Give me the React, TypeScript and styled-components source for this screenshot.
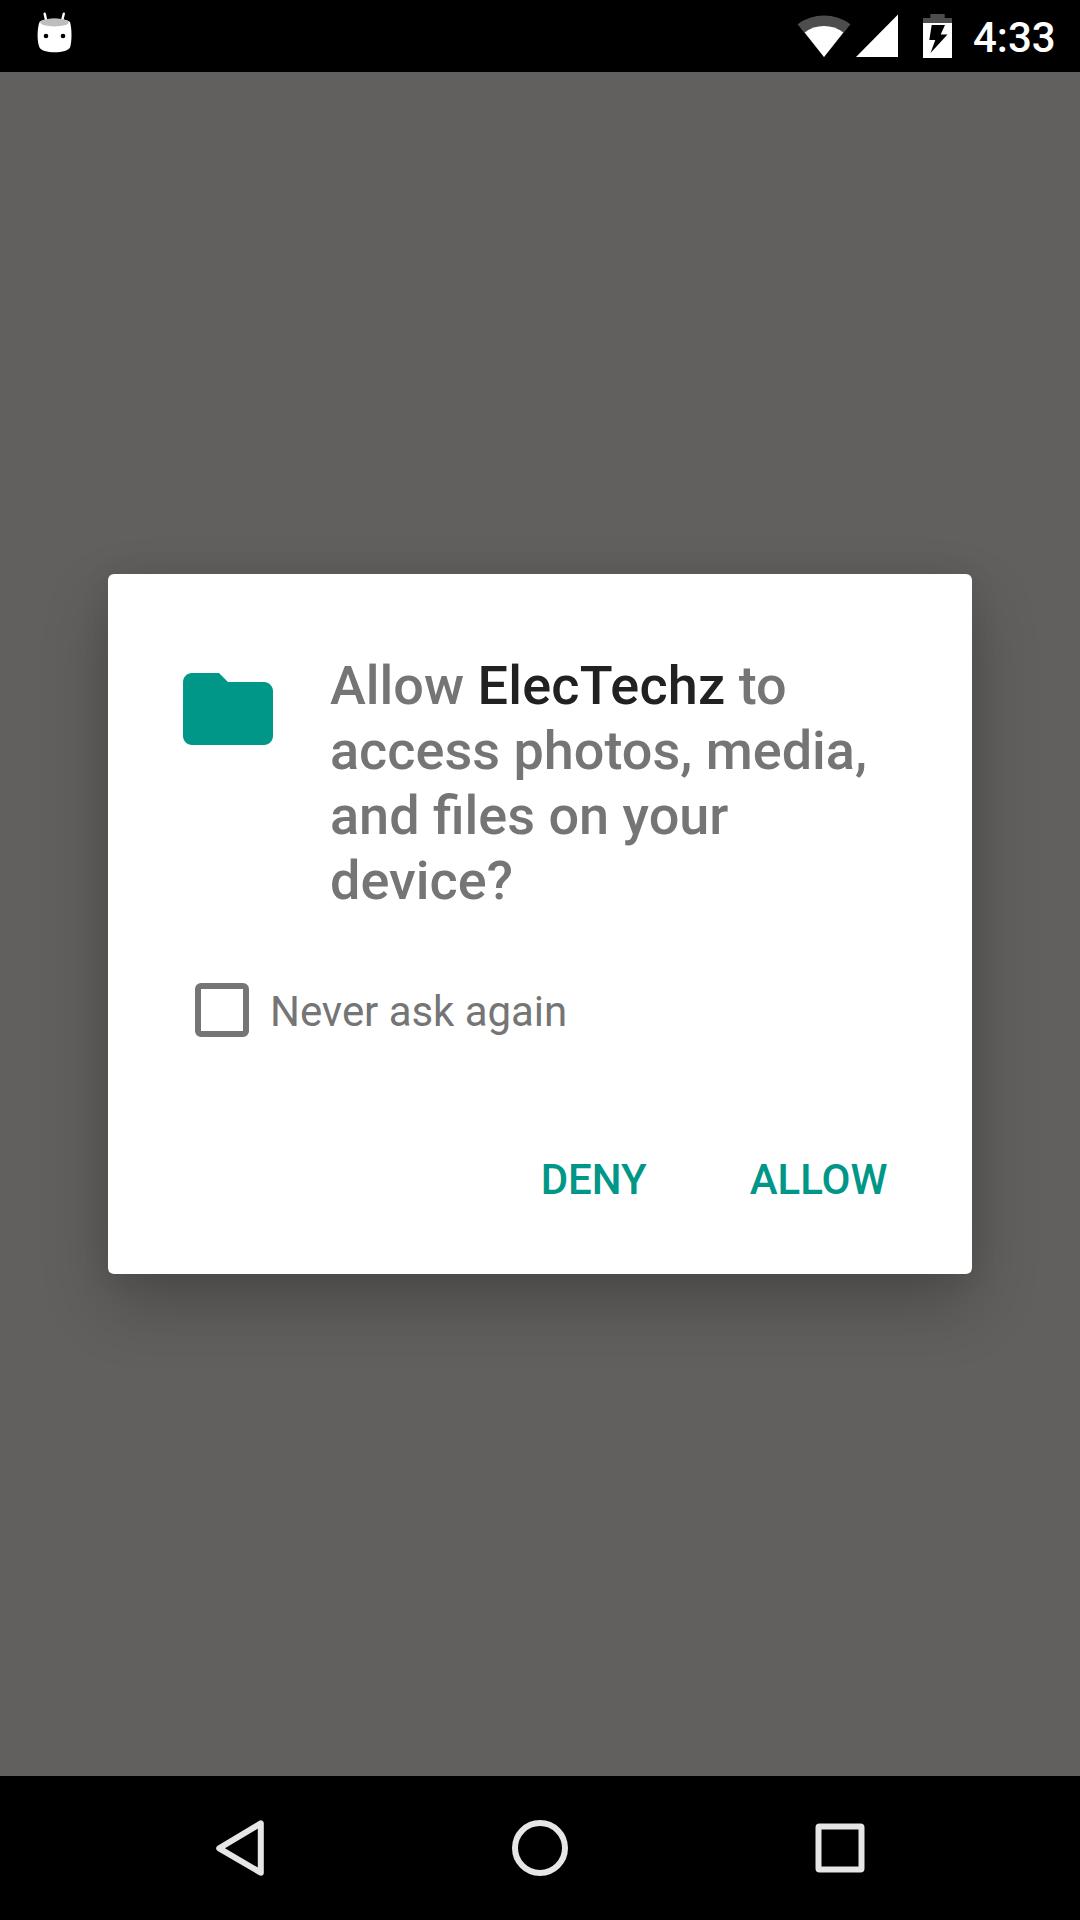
import React from "react";
import styled, { createGlobalStyle } from "styled-components";

const GlobalStyle = createGlobalStyle`
  *, *::before, *::after { box-sizing: border-box; }
  html, body { margin: 0; padding: 0; background: #000; }
  body { font-family: Roboto, "Noto Sans", sans-serif; }
`;

const Screen = styled.div`
  display: flex;
  flex-direction: column;
  width: 1080px;
  height: 1920px;
  overflow: hidden;
  background: #62605e;
`;

const StatusBar = styled.header`
  display: flex;
  align-items: center;
  flex: 0 0 72px;
  padding: 0 25px 0 35.500px;
  background: #000;
  color: #fff;
`;

const StatusIcon = styled.svg<{ $gap?: number }>`
  display: block;
  flex: none;
  margin-right: ${({ $gap = 0 }) => $gap}px;
`;

const Spacer = styled.div`
  flex: 1;
`;

const Clock = styled.time`
  width: 82px;
  font-size: 42px;
  font-weight: 500;
  line-height: 50px;
  padding-top: 4px;
  white-space: nowrap;
`;

const Backdrop = styled.main`
  display: flex;
  justify-content: center;
  align-items: center;
  flex: 1;
`;

const Dialog = styled.section`
  display: flex;
  flex-direction: column;
  width: 864px;
  height: 700px;
  padding: 79px 60px 0 66px;
  border-radius: 6px;
  background: #fff;
  box-shadow: 0 30px 66px rgba(0, 0, 0, 0.24), 0 0 30px rgba(0, 0, 0, 0.07);
`;

const Message = styled.div`
  display: flex;
  align-items: flex-start;
  gap: 48px;
`;

const FolderIcon = styled.svg`
  display: block;
  flex: none;
  margin-top: 2px;
  fill: #009688;
`;

const Title = styled.h1`
  margin: 0;
  width: 560px;
  color: #757575;
  font-size: 54px;
  font-weight: 500;
  line-height: 65px;
`;

const AppName = styled.span`
  color: #212121;
  letter-spacing: 0.2px;
`;

const CheckRow = styled.label`
  display: flex;
  align-items: center;
  gap: 21px;
  height: 54px;
  margin: 70px 0 0 21px;
  color: #757575;
  font-size: 42px;
  line-height: 50px;
  letter-spacing: -0.05px;
  white-space: nowrap;
`;

const CheckBox = styled.input`
  appearance: none;
  flex: none;
  width: 54px;
  height: 54px;
  margin: 0;
  border: 6px solid #757575;
  border-radius: 6px;
`;

const CheckText = styled.span`
  padding-top: 3px;
`;

const Actions = styled.div`
  display: flex;
  justify-content: flex-end;
  gap: 55px;
  margin: 89px 0.500px 0 0;
`;

const Action = styled.button`
  height: 108px;
  padding: 0 24px;
  border: 0;
  background: transparent;
  color: #009688;
  font: 500 42px/50px Roboto, "Noto Sans", sans-serif;
`;

const NavBar = styled.nav`
  display: flex;
  justify-content: center;
  align-items: center;
  flex: 0 0 144px;
  background: #000;
`;

const NavButton = styled.button`
  display: grid;
  place-items: center;
  width: 300px;
  height: 144px;
  padding: 0;
  border: 0;
  background: transparent;
`;

const NavIcon = styled.svg`
  display: block;
  fill: none;
  stroke: #e6e6e6;
  stroke-width: 6;
  stroke-linejoin: round;
`;

export default function App() {
  return (
    <Screen>
      <GlobalStyle />
      <StatusBar>
        <StatusIcon width="36" height="72" viewBox="0 0 36 72">
          <path d="M8.700 13.700 10.300 21M27.800 13.700 26 21" stroke="#fff" strokeWidth="2.400" strokeLinecap="round" />
          <path d="M3.500 22C8 17.800 29 17.800 34 22C36 29 36 41 34.200 47C32 54 5.500 54 3.300 47C1 41 1 29 3.500 22Z" fill="#fff" />
          <ellipse cx="18.500" cy="22.500" rx="14.200" ry="3.900" fill="#bdbdbd" />
          <circle cx="10" cy="36" r="2.300" fill="#000" />
          <circle cx="27" cy="36" r="2.300" fill="#000" />
        </StatusIcon>
        <Spacer />
        <StatusIcon $gap={5} width="54" height="72" viewBox="0 0 54 72">
          <path d="M.5 24.200A44.500 44.500 0 0 1 53.500 24.200L27 57Z" fill="#4d4d4d" />
          <path d="M7.700 32.500A32 32 0 0 1 46.300 32.500L27 57Z" fill="#fff" />
        </StatusIcon>
        <StatusIcon $gap={25} width="42" height="72" viewBox="0 0 42 72">
          <path d="M42 14.500V57H0Z" fill="#fff" />
        </StatusIcon>
        <StatusIcon $gap={21} width="29" height="72" viewBox="0 0 29 72">
          <path d="M7.300 14H21.700V18H29V23.500H0V18H7.300Z" fill="#4d4d4d" />
          <path d="M0 23H29V58H0Z" fill="#fff" />
          <path d="M8.700 25H22L17.700 34.500H24.500L7.500 53L12.300 40H6.300Z" fill="#000" />
        </StatusIcon>
        <Clock>4:33</Clock>
      </StatusBar>

      <Backdrop>
        <Dialog role="dialog" aria-modal="true">
          <Message>
            <FolderIcon width="108" height="108" viewBox="0 0 24 24">
              <path d="M10 4H4c-1.100 0-1.990.9-1.990 2L2 18c0 1.100.9 2 2 2h16c1.100 0 2-.9 2-2V8c0-1.100-.9-2-2-2h-8l-2-2z" />
            </FolderIcon>
            <Title>
              Allow <AppName>ElecTechz</AppName> to access photos, media, and files on your device?
            </Title>
          </Message>
          <CheckRow>
            <CheckBox type="checkbox" />
            <CheckText>Never ask again</CheckText>
          </CheckRow>
          <Actions>
            <Action>DENY</Action>
            <Action>ALLOW</Action>
          </Actions>
        </Dialog>
      </Backdrop>

      <NavBar>
        <NavButton aria-label="Back">
          <NavIcon width="60" height="60" viewBox="0 0 60 60">
            <path d="M50.800 5.300V54.700L9.200 30.300Z" />
          </NavIcon>
        </NavButton>
        <NavButton aria-label="Home">
          <NavIcon width="60" height="60" viewBox="0 0 60 60">
            <circle cx="30" cy="30" r="25" />
          </NavIcon>
        </NavButton>
        <NavButton aria-label="Overview">
          <NavIcon width="60" height="60" viewBox="0 0 60 60">
            <rect x="8.500" y="8.500" width="43" height="43" rx="1" />
          </NavIcon>
        </NavButton>
      </NavBar>
    </Screen>
  );
}
